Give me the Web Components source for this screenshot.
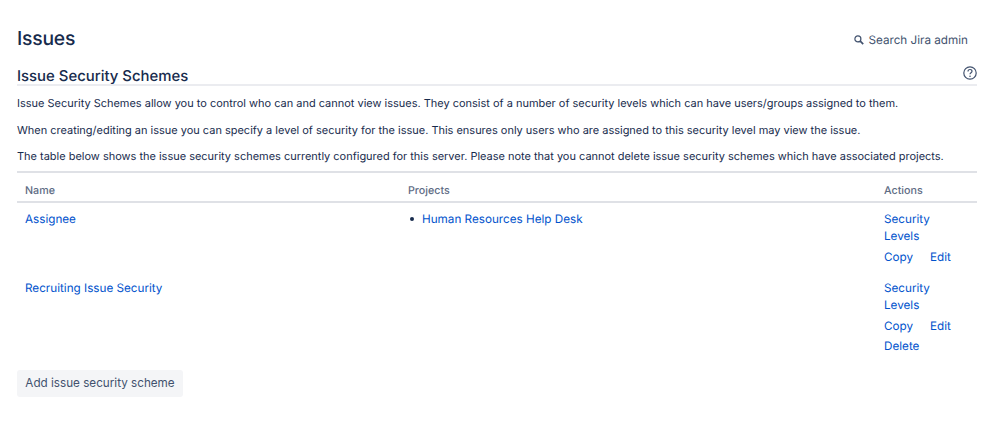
<!DOCTYPE html>
<html>
<head>
<meta charset="utf-8">
<title>Issues</title>
<style>
    html, body { margin: 0; background: #fff; }
    body { font-family: Inter, "Liberation Sans", sans-serif; font-size: 11.7px; color: #172b4d; text-rendering: geometricPrecision; }
</style>
</head>
<body>
<admin-page>
    <page-header slot="header"></page-header>
    <section-title slot="title">Issue Security Schemes</section-title>
    <p>Issue Security Schemes allow you to control who can and cannot view issues. They consist of a number of security levels which can have users/groups assigned to them.</p>
    <p>When creating/editing an issue you can specify a level of security for the issue. This ensures only users who are assigned to this security level may view the issue.</p>
    <p>The table below shows the issue security schemes currently configured for this server. Please note that you cannot delete issue security schemes which have associated projects.</p>
    <schemes-table slot="table">
        <scheme-row name="Assignee" project="Human Resources Help Desk"></scheme-row>
        <scheme-row name="Recruiting Issue Security" deletable></scheme-row>
    </schemes-table>
    <add-button slot="button">Add issue security scheme</add-button>
</admin-page>

<script>
// Page frame, paragraphs come in through the default slot
class AdminPage extends HTMLElement {
    constructor() {
        super();
        this.attachShadow({ mode: 'open' });
        this.shadowRoot.innerHTML = `
            <style>
                :host { display: block; padding: 25px 22px 0 17px; }
                ::slotted(p) { margin: 0; height: 26.5px; line-height: 18px; font-size: 10.98px; color: #172b4d; white-space: nowrap; }
                .copy { padding-top: 8px; }
            </style>
            <slot name="header"></slot>
            <slot name="title"></slot>
            <div class="copy"><slot></slot></div>
            <slot name="table"></slot>
            <slot name="button"></slot>
        `;
    }
}

class PageHeader extends HTMLElement {
    constructor() {
        super();
        this.attachShadow({ mode: 'open' });
        this.shadowRoot.innerHTML = `
            <style>
                :host { display: flex; justify-content: space-between; align-items: center; height: 26px; margin-bottom: 15px; padding-right: 9px; }
                h1 { margin: 0; font-size: 19.3px; font-weight: 500; line-height: 26px; color: #172b4d; letter-spacing: -0.2px; }
                .search { display: flex; align-items: center; gap: 4px; font-size: 11.7px; color: #42526e; padding-top: 4px; }
                svg { display: block; }
            </style>
            <h1>Issues</h1>
            <div class="search">
                <svg width="10" height="10" viewBox="0 0 10 10" fill="none" stroke="#42526e">
                    <circle cx="3.9" cy="3.9" r="3" stroke-width="1.2"/>
                    <path d="M6.2 6.2 9.2 9.2" stroke-width="1.7"/>
                </svg>
                <span>Search Jira admin</span>
            </div>
        `;
    }
}

class SectionTitle extends HTMLElement {
    constructor() {
        super();
        this.attachShadow({ mode: 'open' });
        this.shadowRoot.innerHTML = `
            <style>
                :host { display: flex; justify-content: space-between; align-items: flex-start; height: 18px; border-bottom: 2px solid #ebecf0; font-size: 14.9px; font-weight: 500; line-height: 20px; color: #172b4d; }
                svg { display: block; margin-top: 0; }
            </style>
            <span><slot></slot></span>
            <svg width="14" height="14" viewBox="0 0 14 14" fill="none" stroke="#42526e">
                <circle cx="7" cy="7" r="6.2" stroke-width="1.2"/>
                <path d="M5 5.4C5 4.2 5.9 3.5 7 3.5S9 4.2 9 5.3C9 6.6 7 6.8 7 8.3" stroke-width="1.2"/>
                <circle cx="7" cy="10.2" r=".8" fill="#42526e" stroke="none"/>
            </svg>
        `;
    }
}

class SchemesTable extends HTMLElement {
    constructor() {
        super();
        this.attachShadow({ mode: 'open' });
        this.shadowRoot.innerHTML = `
            <style>
                :host { display: block; margin-top: -3px; border-top: 2px solid #dfe1e6; }
                .head { display: grid; grid-template-columns: 383px 1fr 101px; height: 28px; border-bottom: 2px solid #dfe1e6; }
                .head div { padding: 10px 0 0 8px; font-size: 10.7px; font-weight: 500; line-height: 16px; color: #5e6c84; }
            </style>
            <div class="head"><div>Name</div><div>Projects</div><div>Actions</div></div>
            <slot></slot>
        `;
    }
}

class SchemeRow extends HTMLElement {
    constructor() {
        super();
        this.attachShadow({ mode: 'open' });
        const project = this.getAttribute('project');
        const del = this.hasAttribute('deletable');
        this.shadowRoot.innerHTML = `
            <style>
                :host { display: grid; grid-template-columns: 383px 1fr 101px; padding-top: 7px; line-height: 17px; color: #0052cc; }
                :host(:first-of-type) { padding-top: 8px; }
                .cell { padding-left: 8px; }
                ul { margin: 0; padding: 0 0 0 2px; list-style: none; }
                li { display: flex; align-items: center; gap: 8px; }
                li::before { content: ""; width: 4px; height: 4px; border-radius: 50%; background: #172b4d; }
                a { color: #0052cc; text-decoration: none; }
                .actions { height: 62px; }
                .actions a { display: block; width: 60px; }
                .inline { display: flex; gap: 17px; margin-top: 4px; }
                .inline a { width: auto; }
                .del { margin-top: 3px; }
            </style>
            <div class="cell"><a href="#">${this.getAttribute('name')}</a></div>
            <div class="cell">${project ? `<ul><li><a href="#">${project}</a></li></ul>` : ''}</div>
            <div class="cell actions">
                <a href="#">Security Levels</a>
                <div class="inline"><a href="#">Copy</a><a href="#">Edit</a></div>
                ${del ? '<a class="del" href="#">Delete</a>' : ''}
            </div>
        `;
    }
}

class AddButton extends HTMLElement {
    constructor() {
        super();
        this.attachShadow({ mode: 'open' });
        this.shadowRoot.innerHTML = `
            <style>
                :host { display: block; width: fit-content; margin-top: 28px; }
                button { display: block; height: 27px; width: 166px; padding: 0; border: 0; border-radius: 3px; background: #f4f5f7; font: inherit; font-size: 11.7px; color: #42526e; }
            </style>
            <button><slot></slot></button>
        `;
    }
}

customElements.define('admin-page', AdminPage);
customElements.define('page-header', PageHeader);
customElements.define('section-title', SectionTitle);
customElements.define('schemes-table', SchemesTable);
customElements.define('scheme-row', SchemeRow);
customElements.define('add-button', AddButton);
</script>
</body>
</html>
